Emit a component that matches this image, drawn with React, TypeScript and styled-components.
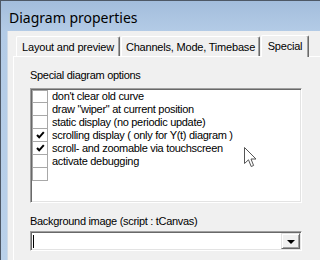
import styled, { createGlobalStyle } from 'styled-components';

const GlobalStyle = createGlobalStyle`
  html, body {
    margin: 0;
    padding: 0;
    background: #f0f0f0;
  }
`;

const options = [
  { label: "don't clear old curve", checked: false },
  { label: 'draw "wiper" at current position', checked: false },
  { label: 'static display (no periodic update)', checked: false },
  { label: 'scrolling display ( only for Y(t) diagram )', checked: true },
  { label: 'scroll- and zoomable via touchscreen', checked: true },
  { label: 'activate debugging', checked: false },
  { label: '', checked: false },
];

const tabs = [
  { label: 'Layout and preview', width: 104, active: false },
  { label: 'Channels, Mode, Timebase', width: 139, active: false },
  { label: 'Special', width: 48, active: true },
];

const CheckMark = () => (
  <svg width="9" height="8" viewBox="0 0 9 8">
    <path d="M1 4 L3.2 6.3 L7.8 1.2" fill="none" stroke="#000" strokeWidth="2" />
  </svg>
);

const Pointer = () => (
  <svg width="14" height="22" viewBox="0 0 14 22">
    <path
      d="M0.5 0.5 L0.5 16.5 L4.5 12.8 L7.2 19.5 L9.6 18.5 L7 12 L12 12 Z"
      fill="#fff"
      stroke="#555"
      strokeWidth="1"
      strokeLinejoin="round"
    />
  </svg>
);

const App = () => {
  return (
    <>
      <GlobalStyle />
      <Window>
        <TitleBar>Diagram properties</TitleBar>
        <Client>
          <TabStrip>
            {tabs.map((t) => (
              <Tab key={t.label} $active={t.active} $width={t.width}>
                {t.label}
              </Tab>
            ))}
          </TabStrip>
          <Panel>
            <Label>Special diagram options</Label>
            <ListBox>
              {options.map((o, i) => (
                <Row key={i}>
                  <CheckCell $first={i === 0}>{o.checked && <CheckMark />}</CheckCell>
                  <RowText>{o.label}</RowText>
                </Row>
              ))}
            </ListBox>
            <Label $gap={11}>Background image (script : tCanvas)</Label>
            <Combo>
              <Caret />
              <DropButton>
                <Arrow />
              </DropButton>
            </Combo>
          </Panel>
        </Client>
        <Cursor>
          <Pointer />
        </Cursor>
      </Window>
    </>
  );
};

const Window = styled.div`
  position: relative;
  display: flex;
  flex-direction: column;
  width: 320px;
  height: 260px;
  box-sizing: border-box;
  overflow: hidden;
  border-top: 1px solid #4e5866;
  border-left: 1px solid #4e5866;
  padding-left: 6px;
  background: linear-gradient(180deg, #a3bddc 0px, #b3cbe6 30px, #bad1ea 100%);
`;

const TitleBar = styled.div`
  display: flex;
  align-items: center;
  height: 30px;
  padding: 3px 0 0 2px;
  box-sizing: border-box;
  font-family: 'Noto Sans', sans-serif;
  font-size: 14px;
  color: #000;
`;

const Client = styled.div`
  flex: 1;
  display: flex;
  flex-direction: column;
  background: #f0f0f0;
  border-left: 1px solid #cfdbe8;
  padding: 3px 0 0 5px;
`;

const TabStrip = styled.div`
  position: relative;
  z-index: 1;
  display: flex;
  align-items: flex-end;
  height: 22px;
  padding-left: 3px;
`;

const Tab = styled.div<{ $active: boolean; $width: number }>`
  box-sizing: border-box;
  display: flex;
  align-items: center;
  justify-content: center;
  flex: none;
  width: ${({ $width }) => $width}px;
  height: ${({ $active }) => ($active ? 22 : 20)}px;
  margin: ${({ $active }) => ($active ? '0 -2px -1px 0' : '0 1px 0 0')};
  padding-bottom: ${({ $active }) => ($active ? 2 : 0)}px;
  background: #f0f0f0;
  border-top: 1px solid #fff;
  border-left: 1px solid #fff;
  border-right: 1px solid #696969;
  box-shadow: inset -1px 0 0 #a0a0a0;
  border-radius: 2px 2px 0 0;
  font-family: 'Liberation Sans', Arial, sans-serif;
  font-size: 11px;
  letter-spacing: -0.2px;
  color: #000;
  white-space: nowrap;
`;

const Panel = styled.div`
  flex: 1;
  display: flex;
  flex-direction: column;
  border-top: 1px solid #fff;
  border-left: 1px solid #fff;
  padding: 11px 0 0 16px;
`;

const Label = styled.div<{ $gap?: number }>`
  margin-top: ${({ $gap }) => $gap ?? 0}px;
  height: 14px;
  font-family: 'Liberation Sans', Arial, sans-serif;
  font-size: 11px;
  letter-spacing: -0.3px;
  line-height: 14px;
  color: #000;
`;

const ListBox = styled.div`
  box-sizing: border-box;
  width: 272px;
  height: 115px;
  margin-top: 6px;
  padding-left: 1px;
  background: #fff;
  border-top: 1px solid #a0a0a0;
  border-left: 1px solid #a0a0a0;
  border-right: 1px solid #fff;
  border-bottom: 1px solid #fff;
  box-shadow: inset 1px 1px 0 #696969, inset -1px -1px 0 #e3e3e3;
  padding-top: 1px;
`;

const Row = styled.div`
  display: flex;
  align-items: stretch;
  height: 13px;
`;

const CheckCell = styled.div<{ $first: boolean }>`
  box-sizing: border-box;
  display: flex;
  align-items: center;
  justify-content: center;
  width: 16px;
  border: 1px solid #a8a8a8;
  border-top-width: ${({ $first }) => ($first ? 1 : 0)}px;
  padding-bottom: 1px;
`;

const RowText = styled.span`
  margin-left: 4px;
  font-family: 'Liberation Sans', Arial, sans-serif;
  font-size: 11px;
  letter-spacing: -0.3px;
  line-height: 13px;
  color: #000;
  white-space: nowrap;
`;

const Combo = styled.div`
  box-sizing: border-box;
  display: flex;
  align-items: center;
  justify-content: space-between;
  width: 272px;
  height: 20px;
  margin-top: 3px;
  padding: 0 1px 0 2px;
  background: #fff;
  border-top: 1px solid #a0a0a0;
  border-left: 1px solid #a0a0a0;
  border-right: 1px solid #fff;
  border-bottom: 1px solid #fff;
  box-shadow: inset 1px 1px 0 #696969, inset -1px -1px 0 #e3e3e3;
`;

const Caret = styled.div`
  width: 1px;
  height: 13px;
  background: #000;
`;

const DropButton = styled.div`
  box-sizing: border-box;
  display: flex;
  align-items: center;
  justify-content: center;
  width: 19px;
  height: 16px;
  background: #f0f0f0;
  border-top: 1px solid #e3e3e3;
  border-left: 1px solid #e3e3e3;
  border-right: 1px solid #696969;
  border-bottom: 1px solid #696969;
  box-shadow: inset 1px 1px 0 #fff, inset -1px -1px 0 #a0a0a0;
`;

const Arrow = styled.div`
  width: 0;
  height: 0;
  border-left: 4px solid transparent;
  border-right: 4px solid transparent;
  border-top: 4px solid #000;
  margin-top: 1px;
`;

const Cursor = styled.div`
  position: absolute;
  left: 243px;
  top: 146px;
  line-height: 0;
`;

export default App;
